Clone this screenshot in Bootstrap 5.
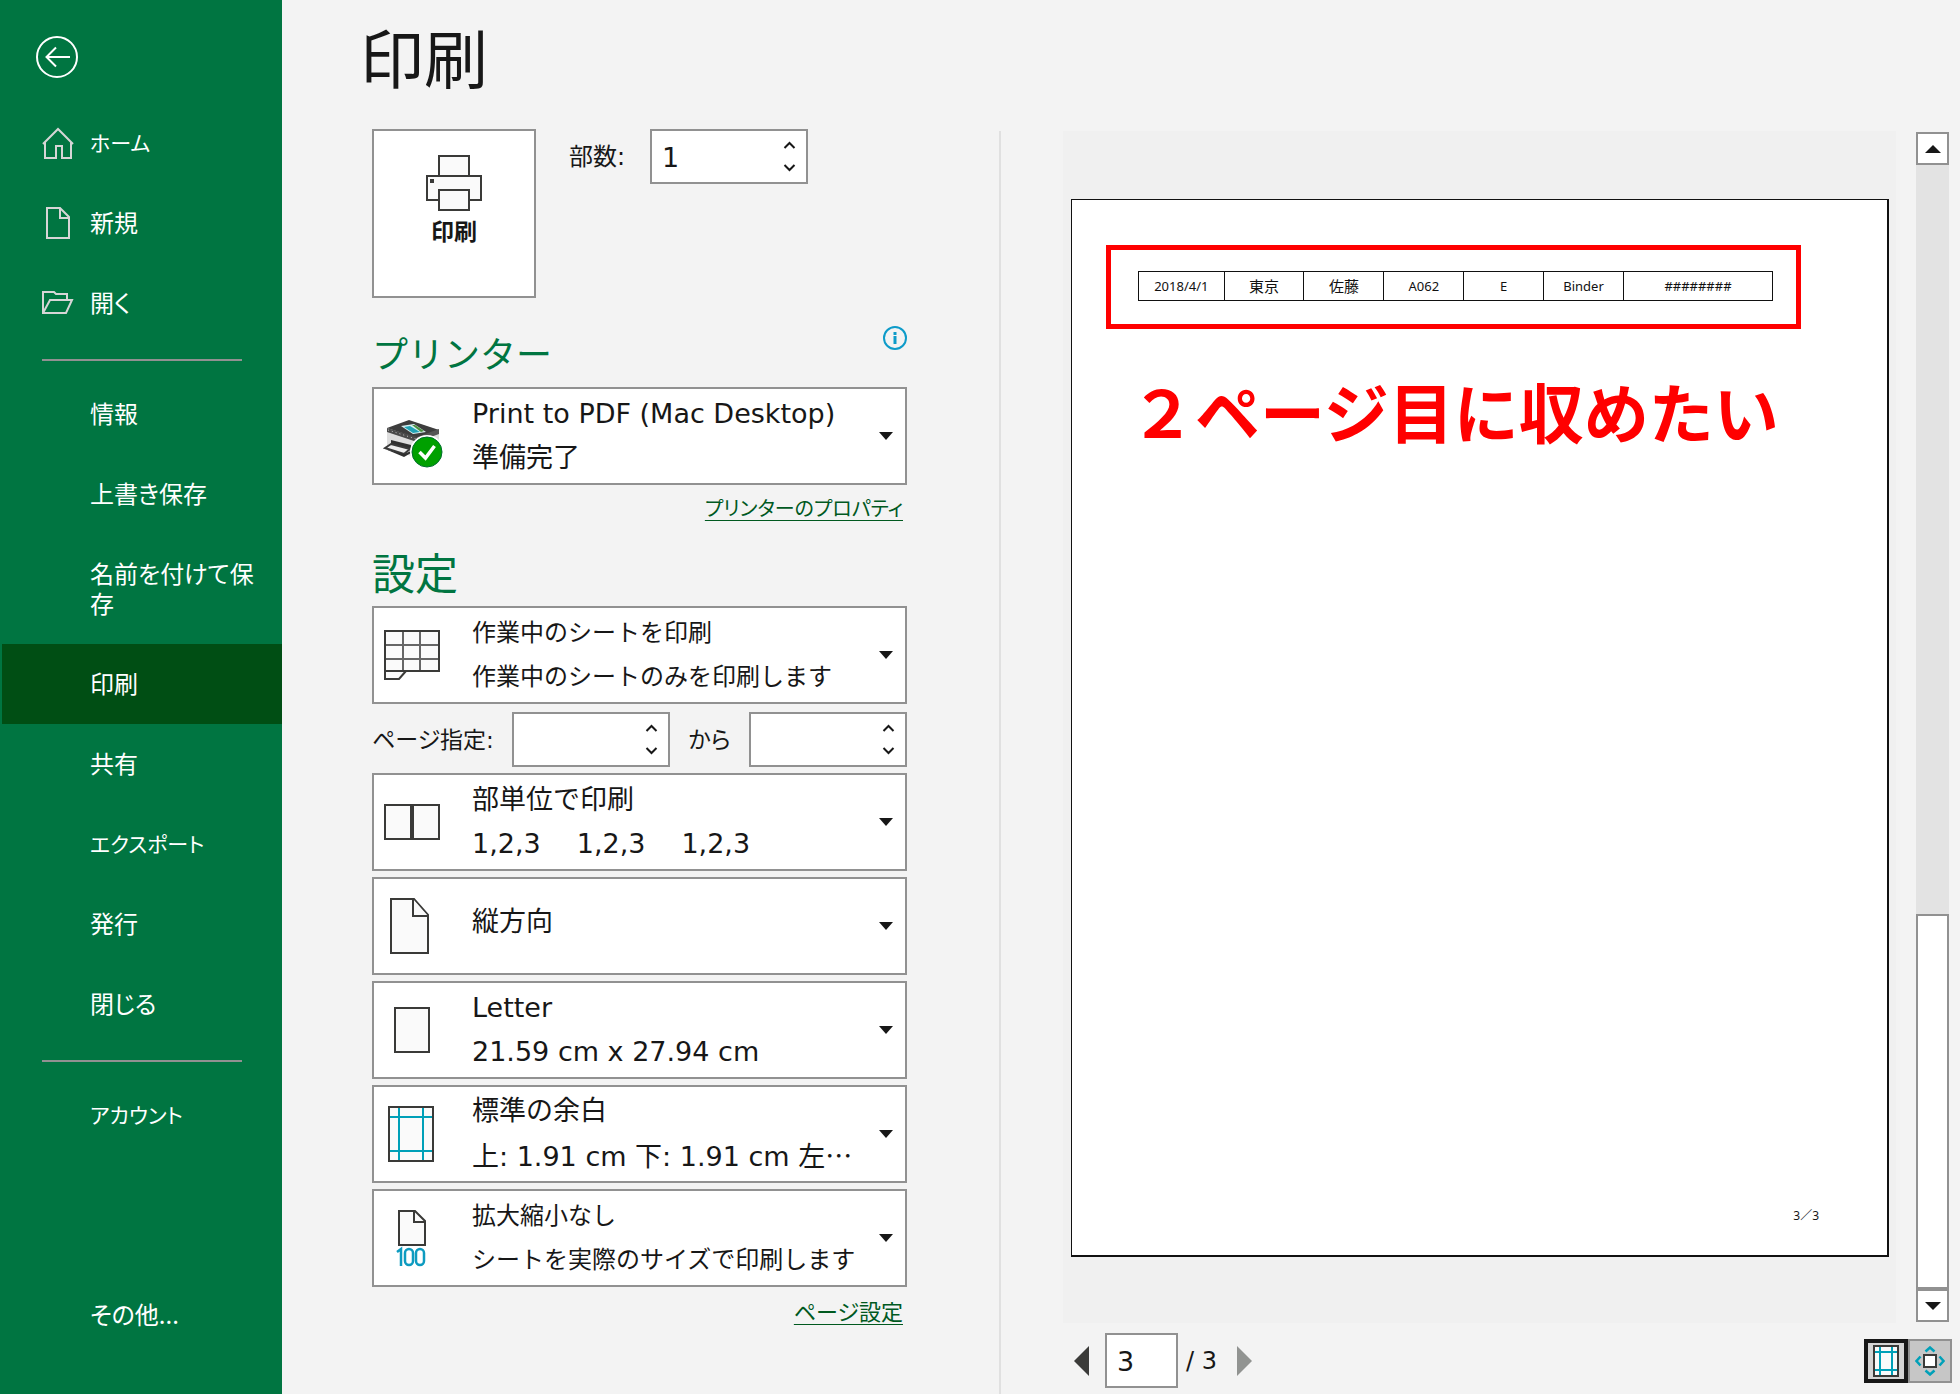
<!DOCTYPE html>
<html lang="ja">
<head>
<meta charset="utf-8">
<meta name="viewport" content="width=device-width, initial-scale=1">
<title>印刷</title>
<link href="https://cdn.jsdelivr.net/npm/bootstrap@5.3.0/dist/css/bootstrap.min.css" rel="stylesheet">
<style>
:root{--xl-green:#007541;--xl-dark:#004e14;--xl-line:#919191;--xl-ink:#171717;--xl-teal:#00a0b8}
body{font-family:"DejaVu Sans","Noto Sans CJK JP",sans-serif;font-size:24px;line-height:30px;color:var(--xl-ink);background:#f3f3f3;font-feature-settings:"palt"}
svg{display:block;flex:none}
.backstage-nav{width:282px;background:var(--xl-green);padding-top:36px}
.back-btn{margin:0 0 25px 36px;width:42px}
.side-item{font-family:"Noto Sans CJK JP",sans-serif;color:#fff;padding:24px 24px 26px 90px;position:relative;border-radius:0;word-break:break-all}
.side-item:hover,.side-item:focus{color:#fff;background:#00602f}
.side-item.active{background:var(--xl-dark);margin-left:2px;padding-left:88px}
.side-kana{font-size:21px}
.side-item svg{position:absolute;left:42px;top:24px}
.side-rule{margin:16px 40px 13px 42px;border-top:2px solid var(--xl-line);opacity:1}
.side-last{margin-top:120px;margin-bottom:38px}
.page-title{font:400 64px/70px "Noto Sans CJK JP",sans-serif;margin:0;padding:20px 0 0 78px;height:129px}
.settings-col{width:535px;margin-left:90px}
.print-btn{width:164px;height:169px}
.boxed{background:#fff;border:2px solid var(--xl-line);border-radius:0;color:var(--xl-ink)}
.boxed:hover,.boxed:focus{background:#fff;border-color:#6b6b6b}
.print-btn .caption-text{font:700 23px/30px "Noto Sans CJK JP",sans-serif}
.copies-label{width:114px;padding-left:33px}
.range-label{font-size:23px}
.until-label{width:79px;font-size:23px}
.spin{width:158px;height:55px}
.spin input,.page-no{border:0;background:none;font-size:27px;line-height:36px;padding:2px 0 0 10px;appearance:textfield;color:var(--xl-ink)}
.spin input{min-width:0;width:100%}
.spin input::-webkit-inner-spin-button,.spin input::-webkit-outer-spin-button{appearance:none;margin:0}
.spin-keys{width:34px}
.spin-keys button{border:0;background:none;padding:0}
.section-row{height:61px}
.section-row h2{font:400 43px/52px "Noto Sans CJK JP",sans-serif;color:var(--xl-green);margin:0}
.section-row h2.kana-title{font-size:36px}
.pick{height:98px;padding:0;text-align:left;font-size:27px;line-height:44px}
.pick .pick-icon{width:98px;padding-left:9px}
.pick .pick-text{min-width:0;white-space:nowrap}
.pick .long-text{font-size:24px}
.pick .arrow{margin-right:12px}
.pick-stack{gap:6px}
.triples{gap:36px}
.range-row{padding:8px 0 6px}
.cjk{font-family:"Noto Sans CJK JP",sans-serif}
.green-link{color:#00591f;text-decoration:underline;text-decoration-thickness:1px;text-underline-offset:4px;font-family:"Noto Sans CJK JP",sans-serif;font-size:22px}
.kana-link{font-size:20px}
.link-row{height:60px;padding:8px 4px 0 0}
.preview-col{border-left:2px solid #e0e0e0;margin:2px 0 0 92px;padding-left:62px}
.preview-bg{background:#f0f0f0;padding:68px 7px 66px 8px}
.sheet{background:#fff;border:1px solid #111;border-width:1px 2px 2px 1px;aspect-ratio:818/1058;padding:45px 86px 0 34px}
.red-frame{border:5px solid #f00;padding:21px 23px 23px 27px}
.red-frame table{width:100%;border-collapse:collapse;table-layout:fixed;font:13px/16px "Noto Sans","Noto Sans CJK JP",sans-serif;color:#111}
.red-frame td{border:1px solid #111;height:29px;padding:0;text-align:center;vertical-align:middle}
.red-frame td.kanji{font-size:15px}
.note-text{font:700 65px/80px "Noto Sans CJK JP",sans-serif;color:#f00;font-feature-settings:normal;margin:41px 0 0 24px;white-space:nowrap}
.folio{font:12px/16px "Noto Sans","Noto Sans CJK JP",sans-serif;font-feature-settings:normal;margin:auto -18px 31px auto}
.sbar{width:33px;margin:1px 11px 1px 20px;background:#e3e3e3}
.sbar button{height:33px;padding:0}
.sbar .thumb{height:33.4%}
.foot{padding:10px 8px 4px 11px}
.page-box{width:73px;height:55px;background:#fff;border:2px solid var(--xl-line)}
.page-total{margin-right:20px}
.view-btn{width:44px;height:44px;padding:0;border-radius:0;background:#c6c6c6;border:2px solid var(--xl-line)}
.view-btn.active{border:4px solid var(--xl-ink);background:#d4d4d4}
</style>
</head>
<body>
<div class="d-flex min-vh-100">
  <nav class="backstage-nav flex-shrink-0 d-flex flex-column" aria-label="ファイル">
    <button class="btn p-0 border-0 back-btn" aria-label="戻る"><svg width="42" height="42" viewBox="0 0 42 42" fill="none" stroke="#fff" stroke-width="2"><circle cx="21" cy="21" r="20"/><path d="M34 21H11M20 11.500L10.500 21l9.500 9.500"/></svg></button>
    <a class="nav-link side-item side-kana" href="#"><svg width="32" height="32" viewBox="0 0 32 32" fill="none" stroke="#d6d6d6" stroke-width="2"><path d="M1 17L16 2l15 15M3 15v16h11V19h6v12h9V15"/></svg>ホーム</a>
    <a class="nav-link side-item" href="#"><svg width="32" height="34" viewBox="0 0 32 34" fill="none" stroke="#d6d6d6" stroke-width="2"><path d="M5 1h13l9 9v21H5zM18 1v10h9"/></svg>新規</a>
    <a class="nav-link side-item" href="#"><svg width="32" height="32" viewBox="0 0 32 32" fill="none" stroke="#d6d6d6" stroke-width="2"><path d="M1 26V5h11l2 2h11v6M1 26l7-13h22l-6 13z"/></svg>開く</a>
    <hr class="side-rule">
    <a class="nav-link side-item" href="#">情報</a>
    <a class="nav-link side-item" href="#">上書き保存</a>
    <a class="nav-link side-item" href="#">名前を付けて保存</a>
    <a class="nav-link side-item active" aria-current="page" href="#">印刷</a>
    <a class="nav-link side-item" href="#">共有</a>
    <a class="nav-link side-item side-kana" href="#">エクスポート</a>
    <a class="nav-link side-item" href="#">発行</a>
    <a class="nav-link side-item" href="#">閉じる</a>
    <hr class="side-rule">
    <a class="nav-link side-item side-kana" href="#">アカウント</a>
    <a class="nav-link side-item side-last" href="#">その他...</a>
  </nav>

  <main class="flex-grow-1 d-flex flex-column">
    <h1 class="page-title">印刷</h1>
    <div class="d-flex flex-grow-1">
      <section class="settings-col flex-shrink-0">
        <div class="d-flex align-items-start mb-4 pb-1">
          <button class="btn boxed print-btn d-flex flex-column align-items-center pt-4">
            <svg width="56" height="56" viewBox="0 0 56 56" fill="#fafafa" stroke="#3a3a38" stroke-width="2"><path d="M13 21V1h30v20M1 21h54v24H1z"/><path d="M13 35h30v20H13z"/><path d="M4 24h4v4H4z" fill="#3a3a38" stroke="none"/></svg>
            <span class="caption-text mt-1">印刷</span>
          </button>
          <div class="d-flex align-items-center">
            <label for="copies" class="copies-label">部数:</label>
            <div class="boxed spin d-flex">
              <input id="copies" type="number" value="1">
              <div class="spin-keys d-flex flex-column justify-content-around align-items-center py-1 flex-shrink-0">
                <button aria-label="増やす"><svg width="13" height="9" viewBox="0 0 13 9" fill="none" stroke="#171717" stroke-width="2"><path d="M1.500 7L6.500 2l5 5"/></svg></button>
                <button aria-label="減らす"><svg width="13" height="9" viewBox="0 0 13 9" fill="none" stroke="#171717" stroke-width="2"><path d="M1.500 2l5 5 5-5"/></svg></button>
              </div>
            </div>
          </div>
        </div>

        <div class="section-row d-flex justify-content-between align-items-start">
          <h2 class="kana-title">プリンター</h2>
          <svg width="24" height="24" viewBox="0 0 24 24" fill="none" stroke="#0d9bc9" stroke-width="2"><circle cx="12" cy="12" r="11"/><path d="M12 10v8M12 6v3" stroke-width="3"/></svg>
        </div>
        <button class="btn boxed pick w-100 d-flex align-items-center" aria-haspopup="listbox">
          <span class="pick-icon flex-shrink-0"><svg class="mt-3" width="62" height="50" viewBox="0 0 62 50"><path d="M4 10L26 2l30 9v18l-25 9L4 29z" fill="#dedede"/><path d="M4 9L26 1l30 10-22 8z" fill="#3d3d3d"/><path d="M4 9l30 9v5L4 13z" fill="#4b4b4b"/><path d="M34 18l22-8v5l-22 8z" fill="#555"/><path d="M18 7l13-2 12 8-13 2z" fill="#d9f0f2"/><path d="M21 8l6-1 10 6-7 1z" fill="#21a3b5"/><path d="M29 6l3 0 9 6-3 1z" fill="#4b8f3e"/><path d="M5 11l28 9" stroke="#c5c5c5" stroke-width="1" stroke-dasharray="1 3"/><path d="M8 21l20 5v5L8 26z" fill="#303030"/><path d="M8 25l19 5-6 5-19-6z" fill="#eee" stroke="#3a3a3a" stroke-width="2"/><path d="M2 30l19 5 7-3v2l-7 4z" fill="#303030"/><circle cx="44" cy="33" r="17" fill="#fff"/><circle cx="44" cy="33" r="15" fill="#00a000" stroke="#00702f" stroke-width="1"/><path d="M36.500 33l6 6 9-12" fill="none" stroke="#fff" stroke-width="3.500"/></svg></span>
          <span class="pick-text flex-grow-1"><span class="d-block">Print to PDF (Mac Desktop)</span><span class="d-block">準備完了</span></span>
          <svg class="arrow" width="14" height="8"><path d="M0 0h14L7 8z" fill="#171717"/></svg>
        </button>
        <div class="link-row text-end"><a class="green-link kana-link" href="#">プリンターのプロパティ</a></div>

        <div class="section-row"><h2>設定</h2></div>
        <div class="d-flex flex-column">
          <button class="btn boxed pick w-100 d-flex align-items-center" aria-haspopup="listbox">
            <span class="pick-icon flex-shrink-0"><svg width="58" height="52" viewBox="0 0 58 52" fill="#fafafa" stroke="#3a3a38" stroke-width="2"><path d="M2 42v8h14l7-8"/><path d="M2 2h54v40H2z"/><path d="M20 3v38M37 3v38M3 16h52M3 30h52" stroke="#666"/></svg></span>
            <span class="pick-text long-text flex-grow-1"><span class="d-block">作業中のシートを印刷</span><span class="d-block">作業中のシートのみを印刷します</span></span>
            <svg class="arrow" width="14" height="8"><path d="M0 0h14L7 8z" fill="#171717"/></svg>
          </button>
          <div class="range-row d-flex align-items-center justify-content-between">
            <label for="from-page" class="range-label">ページ指定:</label>
            <div class="d-flex align-items-center">
              <div class="boxed spin d-flex">
                <input id="from-page" type="number">
                <div class="spin-keys d-flex flex-column justify-content-around align-items-center py-1 flex-shrink-0">
                  <button aria-label="増やす"><svg width="13" height="9" viewBox="0 0 13 9" fill="none" stroke="#171717" stroke-width="2"><path d="M1.500 7L6.500 2l5 5"/></svg></button>
                  <button aria-label="減らす"><svg width="13" height="9" viewBox="0 0 13 9" fill="none" stroke="#171717" stroke-width="2"><path d="M1.500 2l5 5 5-5"/></svg></button>
                </div>
              </div>
              <label for="to-page" class="until-label text-center">から</label>
              <div class="boxed spin d-flex">
                <input id="to-page" type="number">
                <div class="spin-keys d-flex flex-column justify-content-around align-items-center py-1 flex-shrink-0">
                  <button aria-label="増やす"><svg width="13" height="9" viewBox="0 0 13 9" fill="none" stroke="#171717" stroke-width="2"><path d="M1.500 7L6.500 2l5 5"/></svg></button>
                  <button aria-label="減らす"><svg width="13" height="9" viewBox="0 0 13 9" fill="none" stroke="#171717" stroke-width="2"><path d="M1.500 2l5 5 5-5"/></svg></button>
                </div>
              </div>
            </div>
          </div>
          <div class="d-flex flex-column pick-stack">
            <button class="btn boxed pick w-100 d-flex align-items-center" aria-haspopup="listbox">
              <span class="pick-icon flex-shrink-0"><svg width="58" height="40" viewBox="0 0 58 40" fill="#fafafa" stroke="#3a3a38" stroke-width="2"><path d="M2 3h26v34H2zM30 3h26v34H30z"/></svg></span>
              <span class="pick-text flex-grow-1"><span class="d-block">部単位で印刷</span><span class="d-flex triples"><span>1,2,3</span><span>1,2,3</span><span>1,2,3</span></span></span>
              <svg class="arrow" width="14" height="8"><path d="M0 0h14L7 8z" fill="#171717"/></svg>
            </button>
            <button class="btn boxed pick w-100 d-flex align-items-center" aria-haspopup="listbox">
              <span class="pick-icon flex-shrink-0"><svg width="58" height="58" viewBox="0 0 58 58" fill="#fafafa" stroke="#3a3a38" stroke-width="2"><path d="M8 2h23l14 16v38H8z"/><path d="M30 2v17h15"/></svg></span>
              <span class="pick-text flex-grow-1 pb-2">縦方向</span>
              <svg class="arrow" width="14" height="8"><path d="M0 0h14L7 8z" fill="#171717"/></svg>
            </button>
            <button class="btn boxed pick w-100 d-flex align-items-center" aria-haspopup="listbox">
              <span class="pick-icon flex-shrink-0"><svg width="58" height="48" viewBox="0 0 58 48" fill="#fafafa" stroke="#3a3a38" stroke-width="2"><path d="M12 2h34v44H12z"/></svg></span>
              <span class="pick-text flex-grow-1"><span class="d-block">Letter</span><span class="d-block">21.59 cm x 27.94 cm</span></span>
              <svg class="arrow" width="14" height="8"><path d="M0 0h14L7 8z" fill="#171717"/></svg>
            </button>
            <button class="btn boxed pick w-100 d-flex align-items-center" aria-haspopup="listbox">
              <span class="pick-icon flex-shrink-0"><svg width="58" height="58" viewBox="0 0 58 58" fill="#fafafa" stroke="#3a3a38" stroke-width="2"><path d="M6 2h44v54H6z"/><path d="M16 3v52M40 3v52M7 12h42M7 46h42" stroke="#00a0b8"/></svg></span>
              <span class="pick-text flex-grow-1"><span class="d-block">標準の余白</span><span class="d-block">上: 1.91 cm 下: 1.91 cm 左<span class="cjk">…</span></span></span>
              <svg class="arrow" width="14" height="8"><path d="M0 0h14L7 8z" fill="#171717"/></svg>
            </button>
            <button class="btn boxed pick w-100 d-flex align-items-center" aria-haspopup="listbox">
              <span class="pick-icon flex-shrink-0"><svg width="58" height="58" viewBox="0 0 58 58" fill="none" stroke="#3a3a38" stroke-width="2"><path d="M16 2h16l10 10v24H16z" fill="#fafafa"/><path d="M31 2v11h11"/><path d="M14 43l4-3v17" stroke="#0d9bc0" stroke-width="2.500"/><rect x="22" y="40" width="8" height="16" rx="4" stroke="#0d9bc0" stroke-width="2.500"/><rect x="33" y="40" width="8" height="16" rx="4" stroke="#0d9bc0" stroke-width="2.500"/></svg></span>
              <span class="pick-text long-text flex-grow-1"><span class="d-block">拡大縮小なし</span><span class="d-block">シートを実際のサイズで印刷します</span></span>
              <svg class="arrow" width="14" height="8"><path d="M0 0h14L7 8z" fill="#171717"/></svg>
            </button>
          </div>
        </div>
        <div class="link-row text-end"><a class="green-link" href="#">ページ設定</a></div>
      </section>

      <section class="preview-col flex-grow-1 d-flex flex-column">
        <div class="d-flex">
          <div class="preview-bg flex-grow-1">
            <div class="sheet d-flex flex-column">
              <div class="red-frame">
                <table>
                  <colgroup><col style="width:13.5%"><col style="width:12.6%"><col style="width:12.6%"><col style="width:12.6%"><col style="width:12.6%"><col style="width:12.6%"><col></colgroup>
                  <tbody><tr><td>2018/4/1</td><td class="kanji">東京</td><td class="kanji">佐藤</td><td>A062</td><td>E</td><td>Binder</td><td>########</td></tr></tbody>
                </table>
              </div>
              <div class="note-text">２ページ目に収めたい</div>
              <div class="folio">3／3</div>
            </div>
          </div>
          <div class="sbar d-flex flex-column flex-shrink-0">
            <button class="boxed d-flex align-items-center justify-content-center" aria-label="上へ"><svg width="16" height="8"><path d="M0 8h16L8 0z" fill="#171717"/></svg></button>
            <div class="flex-grow-1 d-flex flex-column justify-content-end"><div class="boxed thumb"></div></div>
            <button class="boxed d-flex align-items-center justify-content-center" aria-label="下へ"><svg width="16" height="8"><path d="M0 0h16L8 8z" fill="#171717"/></svg></button>
          </div>
        </div>
        <div class="foot d-flex align-items-center">
          <button class="btn p-0 border-0" aria-label="前のページ"><svg width="15" height="30"><path d="M15 0v30L0 15z" fill="#3b3b39"/></svg></button>
          <input class="boxed page-no page-box ms-3 me-2" type="text" value="3" aria-label="ページ">
          <span class="page-total">/ 3</span>
          <button class="btn p-0 border-0" aria-label="次のページ"><svg width="15" height="30"><path d="M0 0v30l15-15z" fill="#919391"/></svg></button>
          <div class="ms-auto d-flex">
            <button class="btn view-btn active d-flex align-items-center justify-content-center" aria-label="余白の表示"><svg width="26" height="32" viewBox="0 0 26 32" fill="#fafafa" stroke="#3a3a38" stroke-width="2"><path d="M1 1h24v30H1z"/><path d="M7 2v28M19 2v28M2 7h22M2 25h22" stroke="#00a0b8"/></svg></button>
            <button class="btn view-btn d-flex align-items-center justify-content-center" aria-label="ページに合わせる"><svg width="30" height="30" viewBox="0 0 30 30" fill="none" stroke="#00a0b8" stroke-width="2.500"><path d="M9 9h12v12H9z" fill="#fff" stroke="#3a3a38" stroke-width="2"/><path d="M10.500 5.500L15 1.500l4.500 4M10.500 24.500l4.500 4 4.500-4M5.500 10.500L1.500 15l4 4.500M24.500 10.500l4 4.500-4 4.500"/></svg></button>
          </div>
        </div>
      </section>
    </div>
  </main>
</div>
<script src="https://cdn.jsdelivr.net/npm/bootstrap@5.3.0/dist/js/bootstrap.bundle.min.js"></script>
</body>
</html>
